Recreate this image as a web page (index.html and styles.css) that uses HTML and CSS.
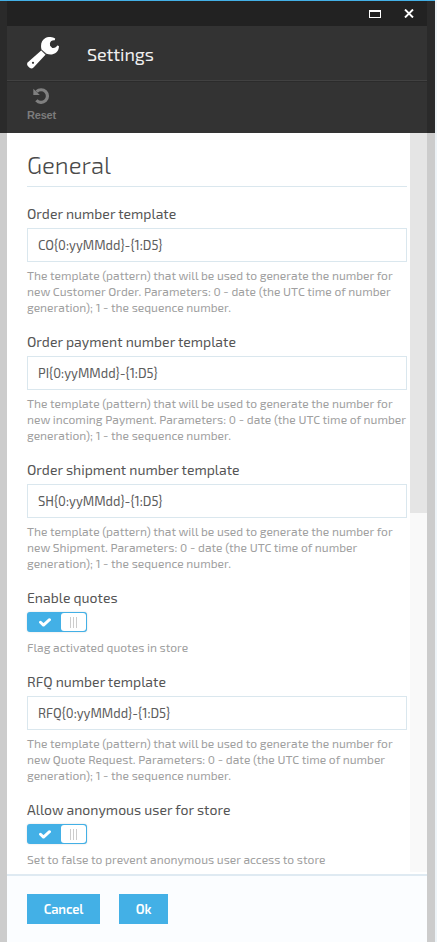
FILE: index.html
```html
<!DOCTYPE html>
<html lang="en">
<head>
<meta charset="utf-8">
<title>Settings</title>
<link rel="stylesheet" href="styles.css">
</head>
<body>
<div class="workspace">
  <section class="blade">
    <div class="titlebar">
      <svg width="12" height="8" viewBox="0 0 12 8"><path d="M0 0h12v8H0zM1 2v5h10V2z" fill="#fff" fill-rule="evenodd"/></svg>
      <svg width="10" height="9" viewBox="0 0 10 9"><path d="M1 .5l8 8M9 .5l-8 8" stroke="#fff" stroke-width="1.9"/></svg>
    </div>
    <header class="head">
      <svg width="32" height="32" viewBox="0 0 32 32"><path d="M14.500 12.500C13.200 7.500 14.600 3 18.400 1 21.300-.6 25.400-.3 28.200 1.500L27.800 3.300C25.200 3 23.400 4.200 22.900 6.500L23.100 8.800 25.300 11C28 11.300 29.400 10.200 30.200 8.600L31.900 8.900C32.200 12.800 29.500 16.600 25.700 17.200 23.500 17.600 21.500 17.300 19.500 16.700Z" fill="#fff"/><path d="M14.200 13.400L18.500 17.700 6.500 30.600Q4.700 32.500 2.600 30.800L.8 28.900Q-.7 27 .9 25.200Z" fill="#fff"/><path d="M14.300 12.800L19.100 17.500" stroke="#888" stroke-width=".6"/><circle cx="6" cy="25.800" r="1.100" fill="#333"/></svg>
      <h1>Settings</h1>
    </header>
    <div class="toolbar">
      <div class="tool">
        <svg width="17" height="16" viewBox="0 0 17 16"><path d="M3.600 3.700A6.300 6.300 0 1 1 3.400 12.200" fill="none" stroke="#808080" stroke-width="3.200"/><path d="M.3.700V7h6.500z" fill="#808080"/></svg>
        <span>Reset</span>
      </div>
    </div>
    <main class="content">
      <form class="fields">
        <h2>General</h2>
        <div class="group">
          <label>Order number template</label>
          <div class="input">CO{0:yyMMdd}-{1:D5}</div>
          <p>The template (pattern) that will be used to generate the number for<br>new Customer Order. Parameters: 0 - date (the UTC time of number<br>generation); 1 - the sequence number.</p>
        </div>
        <div class="group">
          <label>Order payment number template</label>
          <div class="input">PI{0:yyMMdd}-{1:D5}</div>
          <p>The template (pattern) that will be used to generate the number for<br>new incoming Payment. Parameters: 0 - date (the UTC time of number<br>generation); 1 - the sequence number.</p>
        </div>
        <div class="group">
          <label>Order shipment number template</label>
          <div class="input">SH{0:yyMMdd}-{1:D5}</div>
          <p>The template (pattern) that will be used to generate the number for<br>new Shipment. Parameters: 0 - date (the UTC time of number<br>generation); 1 - the sequence number.</p>
        </div>
        <div class="group">
          <label>Enable quotes</label>
          <div class="toggle"><svg width="12" height="9" viewBox="0 0 12 9"><path d="M1.500 4.200l3 2.900L10.500 1.700" fill="none" stroke="#fff" stroke-width="2.900" stroke-linejoin="round" stroke-linecap="round"/></svg><div class="knob"><i></i><i></i><i></i></div></div>
          <p class="note">Flag activated quotes in store</p>
        </div>
        <div class="group">
          <label>RFQ number template</label>
          <div class="input">RFQ{0:yyMMdd}-{1:D5}</div>
          <p>The template (pattern) that will be used to generate the number for<br>new Quote Request. Parameters: 0 - date (the UTC time of number<br>generation); 1 - the sequence number.</p>
        </div>
        <div class="group">
          <label>Allow anonymous user for store</label>
          <div class="toggle"><svg width="12" height="9" viewBox="0 0 12 9"><path d="M1.500 4.200l3 2.900L10.500 1.700" fill="none" stroke="#fff" stroke-width="2.900" stroke-linejoin="round" stroke-linecap="round"/></svg><div class="knob"><i></i><i></i><i></i></div></div>
          <p class="note">Set to false to prevent anonymous user access to store</p>
        </div>
      </form>
      <div class="track"><div class="thumb"></div></div>
    </main>
    <footer class="foot">
      <button class="cancel">Cancel</button>
      <button class="ok">Ok</button>
    </footer>
  </section>
</div>
</body>
</html>
```
FILE: styles.css
```css
* { box-sizing: border-box; }
body {
  margin: 0;
  height: 942px;
  overflow: hidden;
  background: #eef4f8;
  font-family: "Exo 2", Roboto, "Open Sans", sans-serif;
}
.workspace {
  width: 435px;
  height: 942px;
  padding: 0 8px 0 7px;
  border-top: 1px solid #43b0e6;
  background: linear-gradient(#2a2a2a 132px, #ccc 132px);
}
.blade { display: flex; flex-direction: column; height: 941px; background: #fff; }
.titlebar {
  display: flex;
  justify-content: flex-end;
  align-items: center;
  gap: 23px;
  height: 25px;
  padding-right: 13px;
  background: #222;
}
.head {
  display: flex;
  align-items: center;
  gap: 28px;
  height: 55px;
  padding-left: 20px;
  border-bottom: 1px solid #414141;
  background: #333;
}
h1 { margin: 1px 0 0; font-size: 18px; line-height: 24px; font-weight: 400; letter-spacing: -.1px; color: #f0f0f0; }
.toolbar { height: 52px; padding: 6px 0 0 20px; border-top: 1px solid #2b2b2b; background: #333; }
.tool { display: flex; flex-direction: column; align-items: center; width: 29px; }
.tool span { margin-top: 3px; font: 700 11px/16px "Liberation Sans", sans-serif; letter-spacing: -.15px; color: #7c7c7c; }
.content { display: flex; justify-content: space-between; height: 741px; }
.fields { width: 380px; margin-left: 20px; }
h2 {
  height: 54px;
  margin: 0 0 19px;
  padding-top: 16px;
  border-bottom: 1px solid #dae7ee;
  font-size: 24px;
  line-height: 32px;
  font-weight: 300;
  color: #4a4a4a;
}
.group { margin-bottom: 19px; }
label { display: block; height: 16px; margin-bottom: 6px; font-size: 14px; line-height: 16px; letter-spacing: .02px; color: #555; white-space: nowrap; }
.input {
  height: 34px;
  padding: 0 10px;
  border: 1px solid #dae7ee;
  font-size: 13px;
  line-height: 33px;
  color: #5c5c5c;
}
p { margin: 5px 0 0; font-size: 12px; line-height: 16px; letter-spacing: .01px; color: #a0a0a0; white-space: nowrap; }
p.note { margin-top: 7px; }
.toggle {
  display: flex;
  justify-content: space-between;
  align-items: center;
  width: 60px;
  height: 20px;
  padding: 1px 1px 1px 12px;
  border-radius: 3px;
  background: #43b0e6;
  box-shadow: 0 0 2px rgba(0, 0, 0, .15);
}
.knob { display: flex; justify-content: center; align-items: center; gap: 2px; width: 25px; height: 18px; padding-right: 1px; border-radius: 3px; background: #fff; }
.knob i { width: 1px; height: 11px; background: #ccc; }
.track { width: 17px; height: 739px; background: #f9f9f9; }
.thumb { height: 380px; background: #e5e5e5; }
.foot { display: flex; flex: 1; gap: 19px; align-items: flex-start; padding: 18px 20px; border-top: 2px solid #dfeaf2; background: #fbfdff; }
button { height: 30px; padding: 0; border: 0; background: #43b0e6; color: #fff; font: 600 13px/30px "Exo 2", Roboto, sans-serif; letter-spacing: -.1px; }
.cancel { width: 73px; }
.ok { width: 49px; }
```
